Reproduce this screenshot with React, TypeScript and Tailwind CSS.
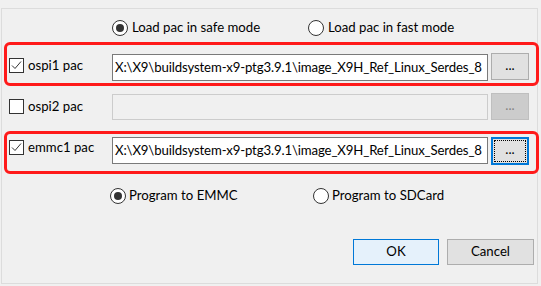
import React from "react";

const FONT = { fontFamily: 'Lato, "Noto Sans", sans-serif' };

function CheckBox({ checked }: { checked: boolean }) {
  return (
    <div className="w-[15px] h-[15px] border border-[#333333] bg-white shrink-0 flex items-center justify-center">
      {checked && (
        <svg width="13" height="13" viewBox="0 0 13 13">
          <polyline points="2,6.5 5,9.5 11,2.5" fill="none" stroke="#333333" strokeWidth="1" />
        </svg>
      )}
    </div>
  );
}

function Radio({ checked }: { checked: boolean }) {
  return (
    <div className="w-[16px] h-[16px] rounded-full border border-[#333333] bg-white shrink-0 flex items-center justify-center">
      {checked && <div className="w-[8px] h-[8px] rounded-full bg-[#333333]" />}
    </div>
  );
}

const PATH = "X:\\X9\\buildsystem-x9-ptg3.9.1\\image_X9H_Ref_Linux_Serdes_8";

export default function App() {
  return (
    <div className="w-[541px] h-[286px] bg-[#f0f0f0] overflow-hidden pt-[8px] text-[13.2px] text-black" style={FONT}>
      <div className="ml-[1px] w-[537px] h-[276px] border border-[#dcdcdc] flex flex-col">
        {/* top radios */}
        <div className="mt-[9px] h-[20px] pl-[110px] flex items-center">
          <div className="w-[196px] flex items-center gap-[4px]">
            <Radio checked />
            <span>Load pac in safe mode</span>
          </div>
          <div className="flex items-center gap-[4px]">
            <Radio checked={false} />
            <span>Load pac in fast mode</span>
          </div>
        </div>

        {/* row 1 */}
        <div className="mt-[4px] ml-[2px] w-[535px] h-[44px] shrink-0 border-[3px] border-[#ff1a1a] rounded-[6px] flex items-start">
          <div className="ml-[2px] mt-[13px] h-[15px] w-[103px] flex items-center gap-[4px]">
            <CheckBox checked />
            <span>ospi1 pac</span>
          </div>
          <div className="mt-[9px] w-[376px] h-[27px] border border-[#7a7a7a] bg-white flex items-center pl-[2px] overflow-hidden whitespace-nowrap tracking-[-0.13px]">
            {PATH}
          </div>
          <div className="ml-[3px] mt-[8px] w-[38px] h-[27px] border border-[#adadad] bg-[#e1e1e1] flex items-center justify-center leading-none pb-[2px]">
            ...
          </div>
        </div>

        {/* row 2 */}
        <div className="mt-[7px] pl-[7px] flex items-start">
          <div className="mt-[6px] h-[15px] w-[103px] flex items-center gap-[4px]">
            <CheckBox checked={false} />
            <span>ospi2 pac</span>
          </div>
          <div className="mt-[1px] w-[376px] h-[26px] border border-[#cccccc] bg-[#f0f0f0]" />
          <div className="ml-[3px] w-[38px] h-[27px] border border-[#bfbfbf] bg-[#cccccc] text-[#838383] flex items-center justify-center leading-none pb-[2px]">
            ...
          </div>
        </div>

        {/* row 3 */}
        <div className="mt-[11px] ml-[2px] w-[535px] h-[43px] shrink-0 border-[3px] border-[#ff1a1a] rounded-[6px] flex items-start">
          <div className="ml-[2px] mt-[6px] h-[15px] w-[103px] flex items-center gap-[4px]">
            <CheckBox checked />
            <span>emmc1 pac</span>
          </div>
          <div className="mt-[3px] w-[376px] h-[27px] border border-[#7a7a7a] bg-white flex items-center pl-[2px] overflow-hidden whitespace-nowrap tracking-[-0.13px]">
            {PATH}
          </div>
          <div className="ml-[3px] mt-[3px] w-[38px] h-[28px] border-2 border-[#0078d7] bg-[#e1e1e1] p-[1px]">
            <div className="w-full h-full border border-dotted border-black flex items-center justify-center leading-none pb-[2px]">
              ...
            </div>
          </div>
        </div>

        {/* bottom radios */}
        <div className="mt-[12px] h-[20px] pl-[108px] flex items-center">
          <div className="w-[203px] flex items-center gap-[3px]">
            <Radio checked />
            <span>Program to EMMC</span>
          </div>
          <div className="flex items-center gap-[3px]">
            <Radio checked={false} />
            <span>Program to SDCard</span>
          </div>
        </div>

        {/* buttons */}
        <div className="mt-[33px] pl-[351px] flex items-center gap-[8px]">
          <div className="w-[86px] h-[26px] border border-[#0078d7] bg-[#e5f1fb] flex items-center justify-center">
            OK
          </div>
          <div className="w-[87px] h-[26px] border border-[#adadad] bg-[#e1e1e1] flex items-center justify-center">
            Cancel
          </div>
        </div>
      </div>
    </div>
  );
}
